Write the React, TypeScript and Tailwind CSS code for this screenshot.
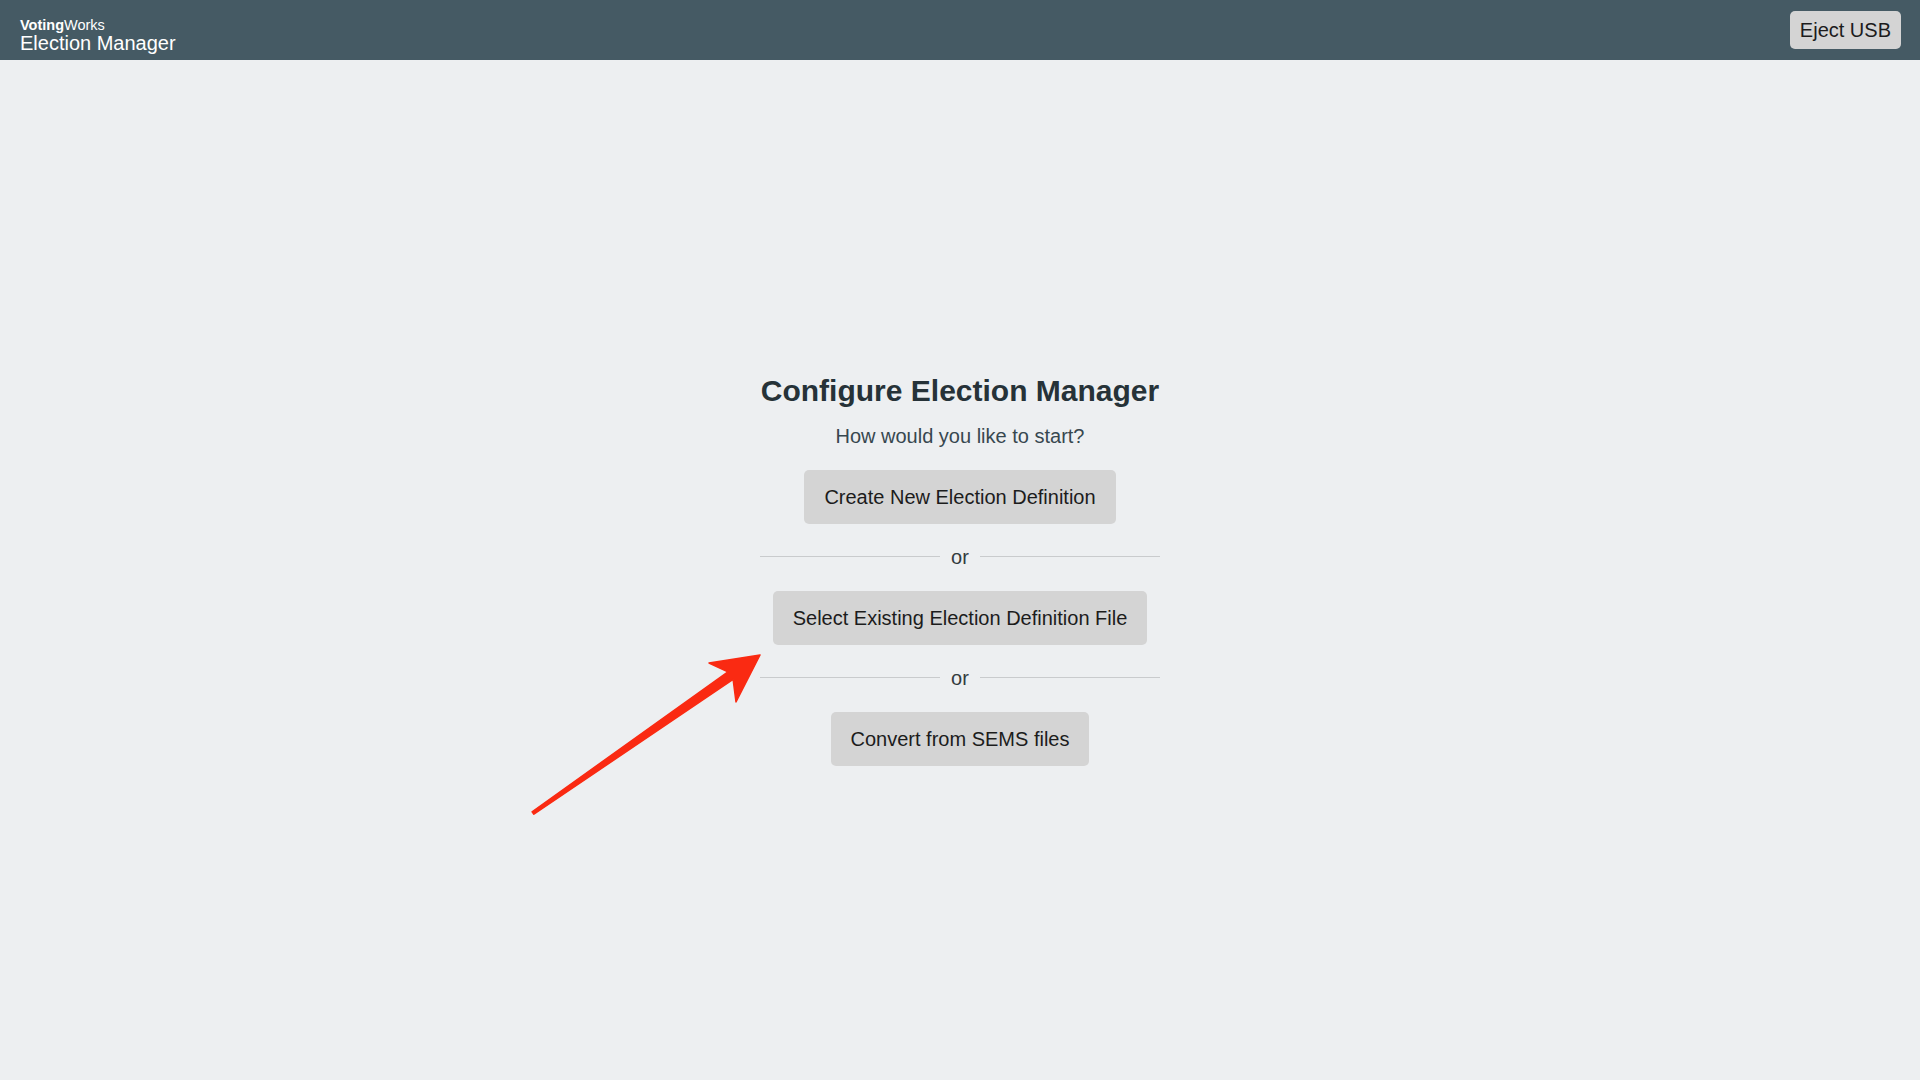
import React from "react";

const Divider = () => (
  <div className="flex items-center gap-[11px] w-full mt-[21px] mb-[22px] h-[24px]">
    <div className="flex-1 h-px bg-[#c9cbcd]" />
    <span className="text-[20px] leading-[24px] text-[#333b40]">or</span>
    <div className="flex-1 h-px bg-[#c9cbcd]" />
  </div>
);

const ActionButton = ({ label }: { label: string }) => (
  <button className="bg-[#d4d4d4] text-[#1c1c1c] text-[20px] leading-[24px] px-5 py-[15px] rounded-[5px]">
    {label}
  </button>
);

export default function App() {
  return (
    <div
      className="relative min-h-screen flex flex-col bg-[#edeff1]"
      style={{ fontFamily: '"Liberation Sans", Arial, sans-serif' }}
    >
      <header className="h-[60px] bg-[#455a64] flex items-start justify-between px-5">
        <div className="pt-[18px] text-white">
          <div className="text-[14.5px] leading-none">
            <span className="font-bold">Voting</span>Works
          </div>
          <div className="text-[20px] leading-none">Election Manager</div>
        </div>
        <button className="mt-[11px] -mr-px h-[38px] px-[10px] bg-[#d4d4d4] rounded-[5px] text-[20px] leading-[24px] text-[#1c1c1c]">
          Eject USB
        </button>
      </header>

      <main className="flex-1 flex items-center justify-center pb-[2px]">
        <div className="w-[400px] flex flex-col items-center">
          <h1 className="text-[30px] leading-[36px] font-bold text-[#263238]">
            Configure Election Manager
          </h1>
          <p className="mt-[15px] text-[20px] leading-[24px] text-[#37474f]">
            How would you like to start?
          </p>
          <div className="mt-[22px]">
            <ActionButton label="Create New Election Definition" />
          </div>
          <Divider />
          <ActionButton label="Select Existing Election Definition File" />
          <Divider />
          <ActionButton label="Convert from SEMS files" />
        </div>
      </main>

      {/* annotation arrow */}
      <svg
        className="absolute inset-0 pointer-events-none"
        width="1920"
        height="1080"
        viewBox="0 0 1920 1080"
      >
        <polygon
          points="760,655 709,663 727.9,671.9 532.1,811.8 533.9,814.2 733.1,679.3 736,702"
          fill="#fa2a12"
          stroke="#fa2a12"
          strokeWidth="1.5"
          strokeLinejoin="round"
        />
      </svg>
    </div>
  );
}
